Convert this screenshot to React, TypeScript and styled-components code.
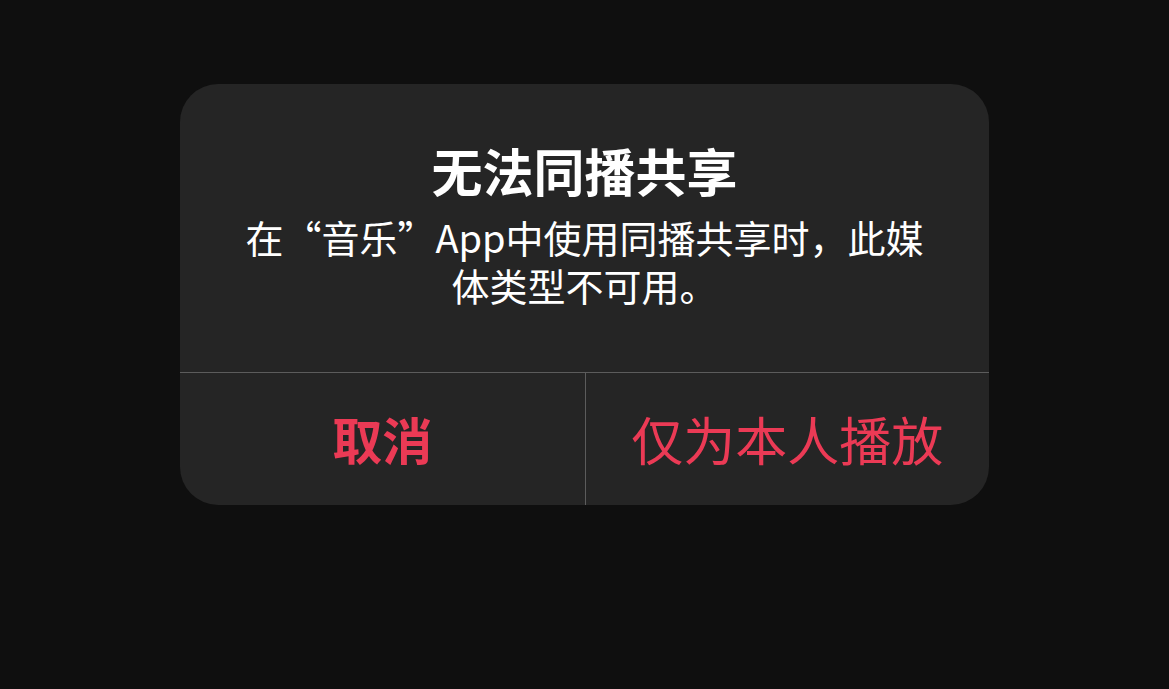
import React from 'react'
import styled, { createGlobalStyle } from 'styled-components'

const GlobalStyle = createGlobalStyle`
    html, body {
        margin: 0;
        padding: 0;
        background: #0f0f0f;
    }
    body {
        font-family: "Noto Sans CJK SC", "Noto Sans", sans-serif;
    }
`

const Page = styled.div`
    display: flex;
    justify-content: center;
    align-items: flex-start;
    padding-top: 84px;
    min-height: 689px;
    box-sizing: border-box;
`

const Dialog = styled.div`
    width: 809px;
    background: #252525;
    border-radius: 38px;
    overflow: hidden;
`

const Content = styled.div`
    height: 288px;
    box-sizing: border-box;
    padding-top: 56px;
    text-align: center;
    color: #ffffff;
`

const Title = styled.div`
    font-size: 51px;
    line-height: 60px;
    font-weight: 700;
`

const Message = styled.div`
    margin-top: 13px;
    font-size: 38px;
    font-weight: 400;
`

const MessageLine = styled.div`
    height: 48px;
    line-height: 48px;
`

const Actions = styled.div`
    display: grid;
    grid-template-columns: 1fr 1fr;
    height: 133px;
    border-top: 1px solid #5c5c5c;
    box-sizing: border-box;
`

const Action = styled.button<{ $bold?: boolean; $divider?: boolean }>`
    display: flex;
    align-items: center;
    justify-content: center;
    background: transparent;
    border: none;
    border-left: ${p => (p.$divider ? '1px solid #5c5c5c' : 'none')};
    padding: 0 0 2px;
    font-family: "Noto Sans CJK SC", "Noto Sans", sans-serif;
    font-size: ${p => (p.$bold ? 50 : 52)}px;
    font-weight: ${p => (p.$bold ? 700 : 400)};
    color: #eb3a55;
    cursor: pointer;
`

export default function App() {
    return <>
        <GlobalStyle />
        <Page>
            <Dialog>
                <Content>
                    <Title>无法同播共享</Title>
                    <Message>
                        <MessageLine>在“音乐”App中使用同播共享时，此媒</MessageLine>
                        <MessageLine>体类型不可用。</MessageLine>
                    </Message>
                </Content>
                <Actions>
                    <Action $bold>取消</Action>
                    <Action $divider>仅为本人播放</Action>
                </Actions>
            </Dialog>
        </Page>
    </>
}
